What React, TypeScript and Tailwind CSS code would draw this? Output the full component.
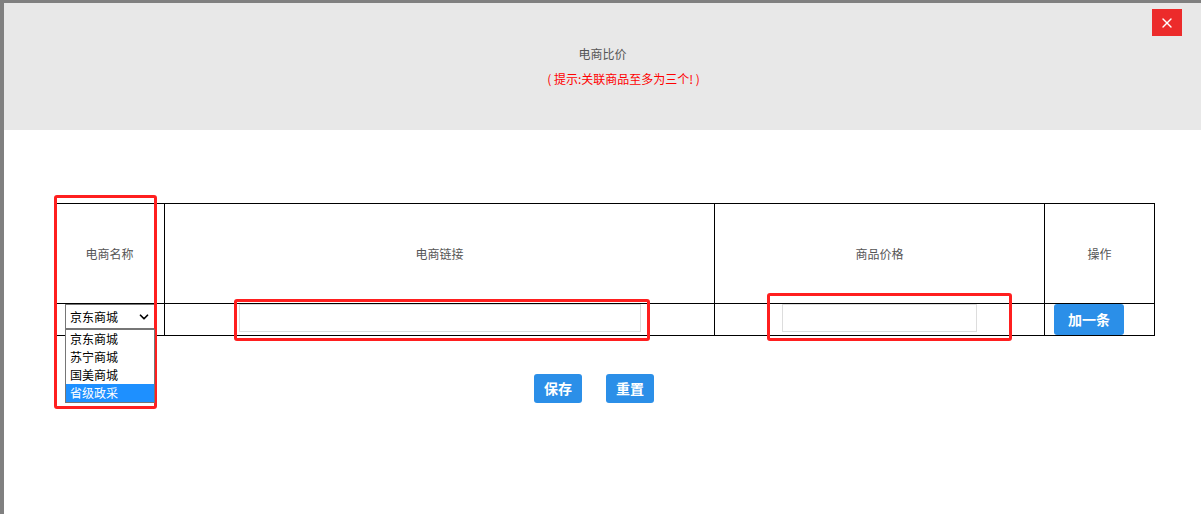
import { ChevronDown, X } from "lucide-react";

const options = ["京东商城", "苏宁商城", "国美商城", "省级政采"];

export default function App() {
  return (
    <div
      className="h-[514px] w-full overflow-hidden bg-[#808080] pl-[4px] pt-[3px]"
      style={{ fontFamily: '"Noto Sans CJK SC", "Liberation Sans", sans-serif' }}
    >
      <div className="relative h-full bg-white">
        {/* Header */}
        <div className="relative h-[127px] bg-[#e8e8e8] pt-[42px] text-center text-[12px]">
          <p className="leading-[18px] text-[#555]">电商比价</p>
          <p className="mt-[7px] pl-[42px] leading-[18px] text-[#ff0000]">( 提示:关联商品至多为三个! )</p>
          <button className="absolute right-[19px] top-[6px] flex h-[27px] w-[30px] items-center justify-center bg-[#ec2b2b] text-white">
            <X className="h-[16px] w-[16px]" strokeWidth={2} />
          </button>
        </div>

        {/* Table */}
        <div className="relative ml-[50px] mt-[73px] w-[1100px]">
          <table className="w-[1100px] table-fixed border-collapse text-[12px] text-[#555]">
            <colgroup>
              <col className="w-[110px]" />
              <col className="w-[550px]" />
              <col className="w-[330px]" />
              <col className="w-[110px]" />
            </colgroup>
            <thead>
              <tr className="h-[100px]">
                <th className="border border-black font-normal">电商名称</th>
                <th className="border border-black font-normal">电商链接</th>
                <th className="border border-black font-normal">商品价格</th>
                <th className="border border-black font-normal">操作</th>
              </tr>
            </thead>
            <tbody>
              <tr className="h-[31px]">
                <td className="relative border border-black px-[10px] align-top">
                  <div className="flex h-[25px] w-[90px] items-center justify-between border border-[#767676] bg-white pl-[4px] pr-[3px] text-[12px] text-black">
                    <span>京东商城</span>
                    <ChevronDown className="h-[14px] w-[14px]" strokeWidth={3} />
                  </div>
                  <ul className="absolute left-[10px] top-[25px] z-10 w-[90px] border border-[#767676] bg-white text-[12px] text-black">
                    {options.map((o, i) => (
                      <li
                        key={o}
                        className={
                          i === 3
                            ? "h-[18px] bg-[#1e90ff] pl-[4px] leading-[18px] text-white"
                            : "h-[18px] pl-[4px] leading-[18px]"
                        }
                      >
                        {o}
                      </li>
                    ))}
                  </ul>
                </td>
                <td className="border border-black align-top">
                  <input className="mx-auto block h-[28px] w-[402px] border border-[#ddd] outline-none" />
                </td>
                <td className="border border-black align-top">
                  <input className="mx-auto block h-[28px] w-[195px] border border-[#ddd] outline-none" />
                </td>
                <td className="border border-black px-[9px] align-top">
                  <button className="block h-[31px] w-[70px] rounded-[3px] bg-[#2b8fe8] text-[14px] font-bold text-white">
                    加一条
                  </button>
                </td>
              </tr>
            </tbody>
          </table>

          {/* annotation boxes */}
          <div className="pointer-events-none absolute left-0 top-[-8px] h-[214px] w-[103px] rounded-[3px] border-[3px] border-[#ff1f1f]" />
          <div className="pointer-events-none absolute left-[180px] top-[96px] h-[42px] w-[416px] rounded-[3px] border-[3px] border-[#ff1f1f]" />
          <div className="pointer-events-none absolute left-[713px] top-[90px] h-[48px] w-[245px] rounded-[3px] border-[3px] border-[#ff1f1f]" />
        </div>

        {/* Actions */}
        <div className="mt-[38px] flex justify-center gap-[24px] pr-[17px]">
          <button className="h-[29px] w-[48px] rounded-[3px] bg-[#2b8fe8] text-[14px] font-bold text-white">保存</button>
          <button className="h-[29px] w-[48px] rounded-[3px] bg-[#2b8fe8] text-[14px] font-bold text-white">重置</button>
        </div>
      </div>
    </div>
  );
}
